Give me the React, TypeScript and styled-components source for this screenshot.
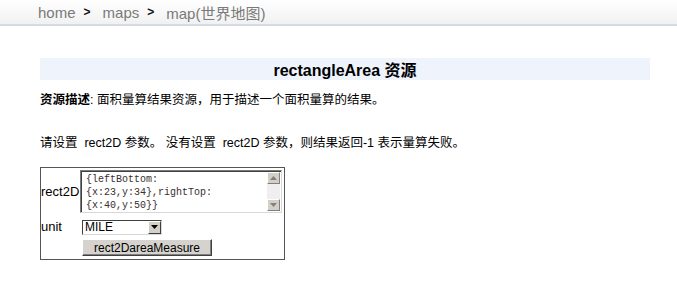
import React from "react";
import styled, { createGlobalStyle } from "styled-components";

const Global = createGlobalStyle`
  html, body { margin: 0; padding: 0; background: #fff; }
  body { font-family: "Liberation Sans", Arial, "Noto Sans CJK SC", sans-serif; font-size: 12.5px; color: #000; }
`;

const Header = styled.div`
  height: 24px;
  border-bottom: 2px solid #d3dae6;
  background: linear-gradient(#ffffff, #f1f1f1);
  display: flex;
  align-items: center;
  padding-left: 38px;
  font-size: 15px;
  color: #7a7a7a;
`;

const Crumb = styled.span`
  color: #7a7a7a;
`;

const Sep = styled.span`
  color: #111;
  font-weight: bold;
  font-size: 12px;
  margin: 0 12px 0 8px;
`;

const Content = styled.div`
  padding: 32px 27px 0 40px;
`;

const Title = styled.div`
  height: 22px;
  background: #eef3fc;
  display: flex;
  align-items: center;
  justify-content: center;
  font-weight: bold;
  font-size: 16px;
`;

const Para = styled.p<{ $top: number }>`
  margin: ${(p) => p.$top}px 0 0 0;
  line-height: 16px;
`;

const Form = styled.div`
  margin-top: 16px;
  width: 243px;
  border: 1px solid #555;
  padding: 2px 0 3px 0;
  display: grid;
  grid-template-columns: 39px auto;
  align-items: center;
`;

const Label = styled.span`
  font-size: 13px;
  line-height: 16px;
`;

const AreaBox = styled.div`
  width: 202px;
  height: 43px;
  box-sizing: border-box;
  border: 1px solid #7b7b7b;
  border-right-color: #d8d8d8;
  border-bottom-color: #d8d8d8;
  box-shadow: inset 1px 1px 0 #404040;
  display: flex;
  background: #fff;
`;

const AreaText = styled.div`
  flex: 1;
  padding: 2px 0 0 5px;
  font-family: "Liberation Mono", "Courier New", monospace;
  font-size: 10px;
  line-height: 13px;
  color: #3a2e2e;
  white-space: pre;
`;

const Scroll = styled.div`
  width: 13px;
  margin: 1px 1px 1px 0;
  display: flex;
  flex-direction: column;
  background: #efefef;
`;

const ScrollBtn = styled.div`
  height: 12px;
  background: #d4d0c8;
  border: 1px solid #fff;
  border-right-color: #808080;
  border-bottom-color: #808080;
  box-sizing: border-box;
  display: flex;
  align-items: center;
  justify-content: center;
`;

const ScrollTrack = styled.div`
  flex: 1;
`;

const SelectBox = styled.div`
  margin: 6px 0 0 2px;
  width: 80px;
  height: 15px;
  box-sizing: border-box;
  border: 1px solid #404040;
  border-right-color: #d8d8d8;
  border-bottom-color: #d8d8d8;
  display: flex;
  align-items: stretch;
  background: #fff;
`;

const SelectText = styled.div`
  flex: 1;
  font-size: 12px;
  line-height: 13px;
  padding-left: 2px;
`;

const DropBtn = styled.div`
  width: 13px;
  background: #d4d0c8;
  border: 1px solid #fff;
  border-right-color: #404040;
  border-bottom-color: #404040;
  box-sizing: border-box;
  display: flex;
  align-items: center;
  justify-content: center;
`;

const UnitLabel = styled(Label)`
  margin-top: 6px;
`;

const Button = styled.button`
  grid-column: 2;
  margin: 4px 0 0 2px;
  width: 130px;
  height: 17px;
  padding: 0;
  font-family: "Liberation Sans", Arial, sans-serif;
  font-size: 12px;
  color: #000;
  background: #d6d3ce;
  border: 1px solid #fff;
  border-right-color: #404040;
  border-bottom-color: #404040;
  box-shadow: inset -1px -1px 0 #808080;
  justify-self: start;
`;

const Tri = ({ up, color }: { up?: boolean; color: string }) => (
  <svg width="7" height="4" viewBox="0 0 7 4">
    <polygon points={up ? "3.5,0 7,4 0,4" : "0,0 7,0 3.5,4"} fill={color} />
  </svg>
);

export default function App() {
  return (
    <>
      <Global />
      <Header>
        <Crumb>home</Crumb>
        <Sep>&gt;</Sep>
        <Crumb>maps</Crumb>
        <Sep>&gt;</Sep>
        <Crumb>map(世界地图)</Crumb>
      </Header>
      <Content>
        <Title>rectangleArea 资源</Title>
        <Para $top={12}>
          <b>资源描述</b>: 面积量算结果资源，用于描述一个面积量算的结果。
        </Para>
        <Para $top={27}>请设置&nbsp; rect2D 参数。 没有设置&nbsp; rect2D 参数，则结果返回-1 表示量算失败。</Para>
        <Form>
          <Label>rect2D</Label>
          <AreaBox>
            <AreaText>{"{leftBottom:\n{x:23,y:34},rightTop:\n{x:40,y:50}}"}</AreaText>
            <Scroll>
              <ScrollBtn><Tri up color="#808080" /></ScrollBtn>
              <ScrollTrack />
              <ScrollBtn><Tri color="#808080" /></ScrollBtn>
            </Scroll>
          </AreaBox>
          <UnitLabel>unit</UnitLabel>
          <SelectBox>
            <SelectText>MILE</SelectText>
            <DropBtn><Tri color="#000" /></DropBtn>
          </SelectBox>
          <Button>rect2DareaMeasure</Button>
        </Form>
      </Content>
    </>
  );
}
